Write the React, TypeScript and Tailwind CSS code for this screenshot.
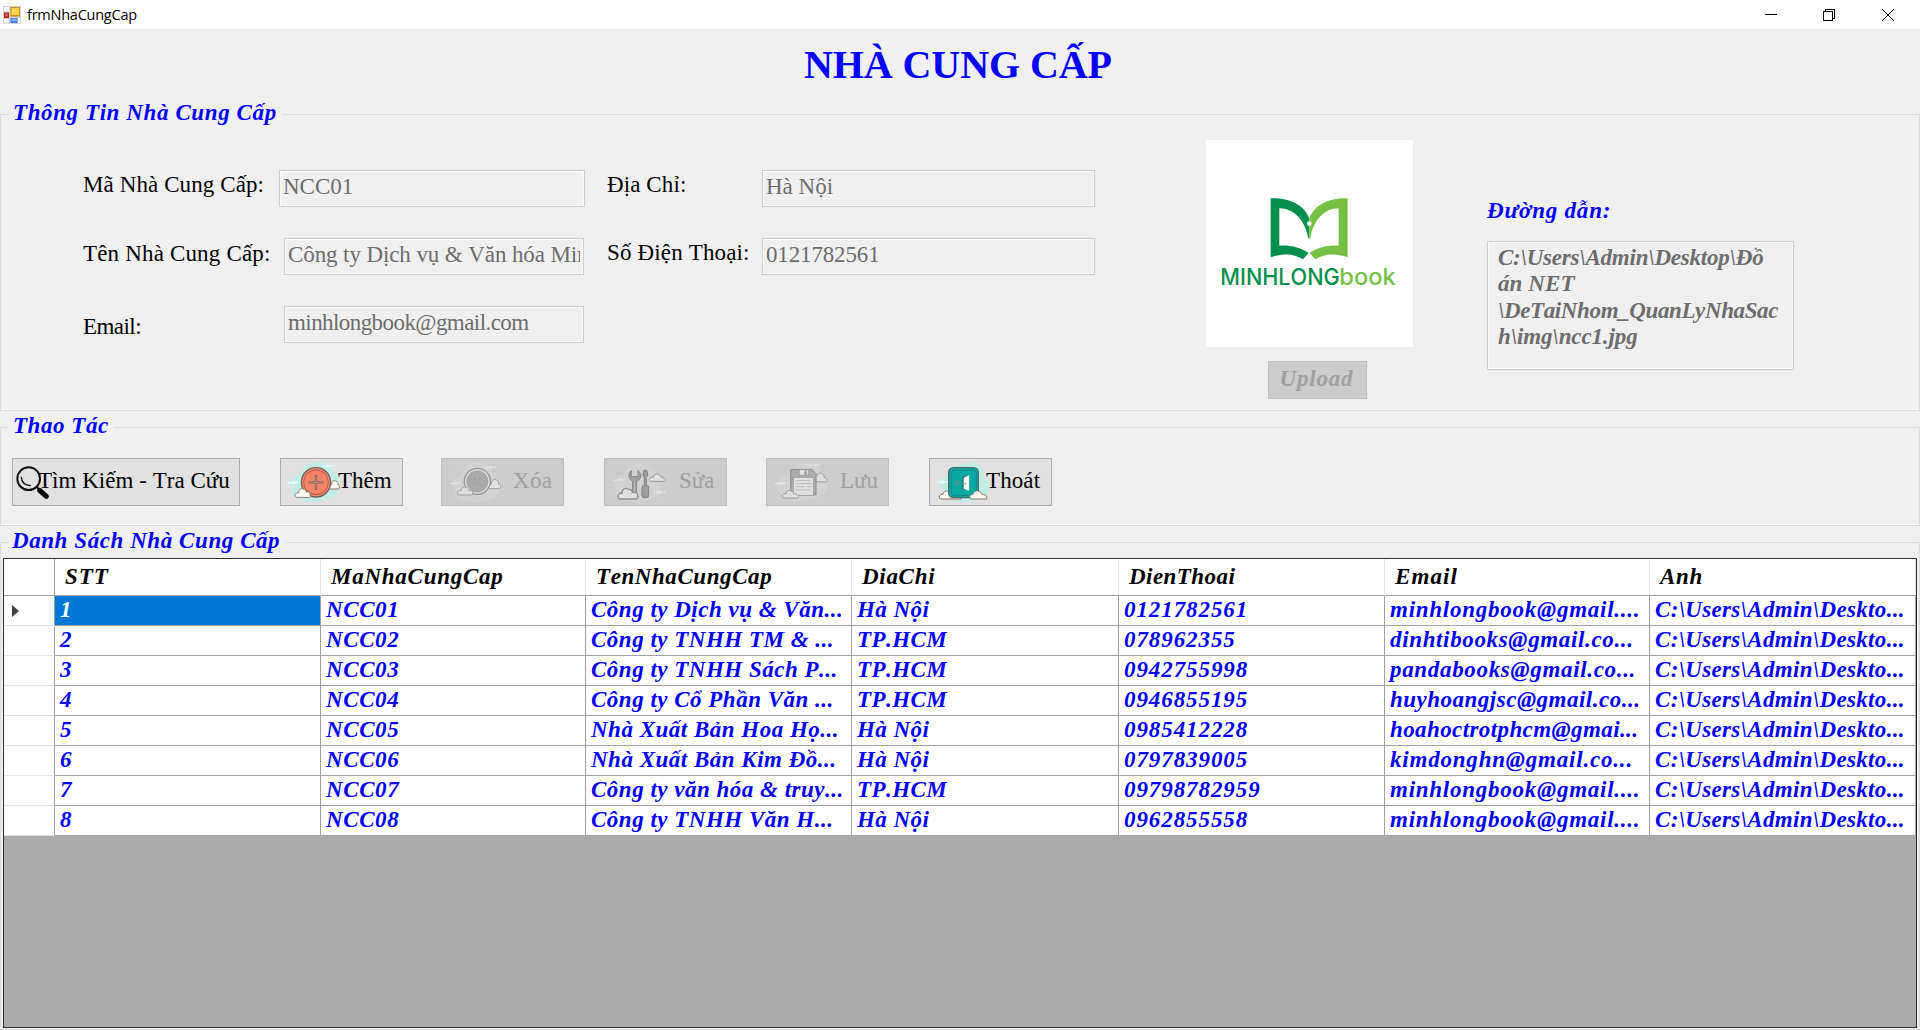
import type { ReactNode } from "react";

function GroupBox({ title, legend, className, children }: { title: string; legend: string; className: string; children: ReactNode }) {
  return (
    <fieldset className={`border border-[#dcdcdc] pl-2 shadow-[inset_0_-1px_0_#f8f8f8] ${className}`}>
      <legend className={`h-[30px] pt-px pb-[3px] pr-[5px] leading-[26px] font-bold italic text-[#0000ff] whitespace-nowrap ${legend}`}>{title}</legend>
      {children}
    </fieldset>
  );
}

function Field({ children, className }: { children: string; className: string }) {
  return (
    <div className={`h-[37px] shrink-0 border border-[#cfcfcf] px-[3px] pt-[3px] shadow-[inset_0_0_0_1px_#fafafa] text-[#6d6d6d] leading-[26px] ${className}`}>
      <div className="overflow-hidden whitespace-nowrap">{children}</div>
    </div>
  );
}

function Label({ children, className }: { children: string; className: string }) {
  return <div className={`shrink-0 whitespace-nowrap leading-[26px] text-black ${className}`}>{children}</div>;
}

function ActionButton({ icon, children, className, text, disabled }: { icon: ReactNode; children: string; className: string; text: string; disabled?: boolean }) {
  return (
    <button
      disabled={disabled}
      className={`flex h-[48px] shrink-0 items-start border ${disabled ? "border-[#bfbfbf] bg-[#cccccc] text-[#a0a0a0]" : "border-[#adadad] bg-[#e1e1e1] text-black"} ${className}`}
    >
      {icon}
      <span className={`relative mt-[9px] whitespace-nowrap leading-[26px] ${text}`}>{children}</span>
    </button>
  );
}

function SearchIcon() {
  return (
    <svg className="mt-[7px] ml-[3px] shrink-0" width="34" height="34" viewBox="48 194 102 102" fill="none">
      <circle cx="86" cy="232" r="34" stroke="#111" strokeWidth="6" />
      <path d="M64 228c1 14 10 23 27 25" stroke="#111" strokeWidth="4" strokeLinecap="round" />
      <path d="M110 257l9 9" stroke="#111" strokeWidth="6" />
      <path d="M119 267l20 18" stroke="#000" strokeWidth="15" strokeLinecap="round" />
    </svg>
  );
}

function AddIcon() {
  return (
    <svg className="mt-[2px] ml-[6px] shrink-0" width="54" height="42" viewBox="862 180 162 126" fill="none">
      <path d="M868 244c4-16 20-14 32-24 10-10 12-30 34-34 22-5 36-4 52 4 16 9 10 24 22 30 14 8 16 22 12 34-4 10-4 26-16 32-12 7-24 8-36 14-22 8-46 2-60-4-14-4-22-2-28-12-6-8 2-18-2-24-4-6-12-6-10-16z" fill="#c4ece6" />
      <path d="M862 246l34-2M882 240v10M966 196l38-2M982 189l4 10" stroke="#eefbf9" strokeWidth="4" />
      <path d="M990 264c-4-7 0-12 6-13 0-10 6-14 12-11 6 2 8 6 7 11 6 2 6 12 0 13z" fill="#fffdf2" stroke="#8b7c74" strokeWidth="3" />
      <circle cx="949" cy="244" r="44" fill="#f58466" stroke="#71625f" strokeWidth="4" />
      <circle cx="949" cy="244" r="37" stroke="#a95f52" strokeWidth="3" />
      <path d="M949 222v44M927 244h44" stroke="#7c6560" strokeWidth="7" />
      <path d="M949 225v38M930 244h38" stroke="#d69a86" strokeWidth="2" />
      <path d="M889 289c-7-7 0-15 8-13 0-11 8-15 14-12 7 1 9 5 9 10 8-4 13 3 10 8 4 2 4 7 0 7z" fill="#fffdf2" stroke="#8b7c74" strokeWidth="3" />
    </svg>
  );
}

function DeleteIcon() {
  return (
    <svg className="mt-[2px] ml-[7px] shrink-0" width="54" height="42" viewBox="87 60 162 126" fill="none">
      <path d="M92 126c4-16 22-14 32-26 10-14 14-30 34-34 22-4 44 0 54 12 8 10 2 20 14 30 14 8 20 22 14 34-6 10-4 22-20 30-14 6-22 4-34 10-20 6-46 0-56-6-12-2-18-4-22-12-4-10 0-18-6-24-6-4-12-6-10-14z" fill="#d2d2d2" />
      <path d="M88 128l34-2M108 120v12M194 80l34-2M210 73l4 12" stroke="#e2e2e2" strokeWidth="4" />
      <path d="M206 143c-4-8 2-13 8-14 0-12 9-17 16-12 7 4 6 8 5 12 10 0 10 14 0 14z" fill="#dedede" stroke="#9c9c9c" strokeWidth="3" />
      <circle cx="172" cy="121" r="39" fill="#dedede" stroke="#949494" strokeWidth="4" />
      <circle cx="172" cy="121" r="32" fill="#a9a9a9" stroke="#9b9b9b" strokeWidth="2" />
      <path d="M162 111l20 20M182 111l-20 20" stroke="#959595" strokeWidth="3" />
      <path d="M168 121h8M172 117v8" stroke="#b5b5b5" strokeWidth="2" />
      <path d="M115 162c-7-8 0-15 9-13 0-10 8-13 14-10 7 2 8 6 8 9 8-2 14 4 11 8 3 3 2 6-2 6z" fill="#dedede" stroke="#9c9c9c" strokeWidth="3" />
    </svg>
  );
}

function EditIcon() {
  return (
    <svg className="mt-[2px] ml-[8px] shrink-0" width="54" height="42" viewBox="579 60 162 126" fill="none">
      <path d="M584 118c4-16 18-8 28-20 12-14 18-26 40-30 24-6 44 0 52 16 6 12 0 26 6 36 8 12 18 24 10 38-6 12-26 10-36 18-20 10-54 6-70 0-12-4-24-10-26-24-4-14-6-20-4-34z" fill="#d2d2d2" />
      <path d="M581 118l34-2M600 110v12M702 155l34-2M718 147l3 13" stroke="#e2e2e2" strokeWidth="4" />
      <path d="M638 170v-49c-14-7-14-26-4-32v18h20V89c12 8 12 25-4 32v49z" fill="#a0a0a0" stroke="#858585" strokeWidth="3" />
      <path d="M644 125v44" stroke="#bcbcbc" strokeWidth="3" />
      <path d="M671 89q5-4 10 0l2 13-4 7v26h-6v-26l-4-7z" fill="#9a9a9a" stroke="#858585" strokeWidth="3" />
      <rect x="666" y="133" width="20" height="37" rx="6" fill="#9b9b9b" stroke="#858585" strokeWidth="3" />
      <path d="M672 141v20M679 141v20" stroke="#b0b0b0" strokeWidth="2" />
      <path d="M690 121c-5-7 2-14 10-12 0-11 14-15 20-4 6 0 8 4 7 6 8-1 11 7 7 10z" fill="#dedede" stroke="#9a9a9a" strokeWidth="3" />
      <path d="M598 174c-8-8-1-19 8-17 0-14 13-19 20-11 6-3 12 3 11 9 10-4 19 4 15 10 4 4 2 9-3 9z" fill="#e0e0e0" stroke="#949494" strokeWidth="4" />
    </svg>
  );
}

function SaveIcon() {
  return (
    <svg className="mt-[2px] ml-[7px] shrink-0" width="55" height="42" viewBox="99 60 165 126" fill="none">
      <path d="M106 130c4-16 22-20 32-30 10-14 20-28 42-32 28-4 48 2 56 16 6 10 2 20 10 30 10 12 18 22 10 38-8 12-24 10-36 20-22 10-56 8-78 2-16-2-22-8-26-20-4-8-12-12-10-24z" fill="#d2d2d2" />
      <path d="M102 128l34-2M120 120v12M204 73l34-2M220 66l4 12" stroke="#e2e2e2" strokeWidth="4" />
      <path d="M222 122c-4-12 0-18 8-20 2-6 10-8 15-3 5 4 5 7 4 11 10 0 14 12 4 13z" fill="#dedede" stroke="#9c9c9c" strokeWidth="3" />
      <path d="M151 85h62l12 13v64h-76V87z" fill="#ababab" stroke="#8c8c8c" strokeWidth="3" />
      <path d="M175 86h28v17h-28z" fill="#dedede" stroke="#959595" strokeWidth="2" />
      <path d="M190 88h8v14h-8z" fill="#aaa" />
      <rect x="157" y="109" width="60" height="54" fill="#e0e0e0" stroke="#999" strokeWidth="2" />
      <path d="M164 119h44M162 128h50M164 137h28M198 137h14M164 147h46" stroke="#b4b4b4" strokeWidth="2.500" />
      <path d="M126 171c-7-8 0-14 9-12 0-10 10-13 17-8 6 2 7 5 7 8 8-2 15 3 13 8 1 3-1 4-3 4z" fill="#dedede" stroke="#9c9c9c" strokeWidth="3" />
    </svg>
  );
}

function ExitIcon() {
  return (
    <svg className="mt-[2px] ml-[7px] shrink-0" width="53" height="42" viewBox="592 60 159 126" fill="none">
      <path d="M596 124c6-14 24-14 34-24 12-14 20-30 44-34 24-4 42 0 52 14 8 14 4 22 12 36 10 12 12 24 6 40-8 12-24 10-36 20-20 8-52 10-66 2-14-2-22-6-28-18-4-10-2-16-8-22-6-4-12-6-10-14z" fill="#c1ece6" />
      <path d="M594 124l32-2M606 115l4 14" stroke="#effbf9" strokeWidth="4" />
      <path d="M602 174c-8-8 0-16 8-14 2-11 12-12 19-7 12 2 30 8 36 21z" fill="#fffaf0" stroke="#85766e" strokeWidth="3" />
      <rect x="627" y="80" width="89" height="90" rx="14" fill="#07a9a5" stroke="#4f6b6a" strokeWidth="4" />
      <path d="M634 99q0-12 12-12h52q12 0 12 12v54q0 11-12 11h-52q-12 0-12-11z" stroke="#168786" strokeWidth="3" />
      <path d="M668 106h12v38h-12z" stroke="#54716b" strokeWidth="3" />
      <path d="M673 111l15-8v46l-15-6z" fill="#fffdf2" stroke="#c9d9d0" strokeWidth="1" />
      <circle cx="677" cy="128" r="2" fill="#777" />
      <path d="M648 126h20M656 118l-8 8 8 8" stroke="#5d8e89" strokeWidth="4" />
      <path d="M694 174c-7-7-3-14 6-14 1-10 14-14 21-7 6 2 7 5 7 8 9-2 16 6 13 13z" fill="#fffaf0" stroke="#85766e" strokeWidth="3" />
    </svg>
  );
}

function AppIcon() {
  return (
    <svg width="18" height="18" viewBox="0 0 18 18">
      <rect x="0" y="0" width="18" height="18" fill="#d2d2d2" />
      <rect x="1" y="1" width="5" height="4.500" fill="#fff" />
      <rect x="1" y="13" width="5" height="4" fill="#fff" />
      <rect x="15" y="12" width="2" height="5" fill="#fff" />
      <rect x="7.500" y="1" width="9.500" height="9.500" fill="#c99412" />
      <rect x="8.500" y="2" width="7.500" height="7" fill="#fcd549" />
      <rect x="1" y="6.500" width="5" height="5.500" fill="#b3201c" />
      <rect x="2.200" y="7.500" width="2.500" height="3" fill="#e0675d" />
      <rect x="7.500" y="12" width="7" height="5" fill="#4583e0" />
      <rect x="8.500" y="13" width="5" height="2" fill="#86b4f4" />
    </svg>
  );
}

function CompanyLogo() {
  return (
    <svg width="207" height="207" viewBox="78 60 621 621" className="bg-white">
      <path fill="#048f4c" d="M272 235c60-2 103 22 116 62v60c-2-2-3-4-4-6-8-48-42-86-86-86v112c34-2 64 6 88 22l-17 19c-28-18-60-18-97-6z" />
      <path fill="#76c043" d="M503 235c-60-2-102 22-115 62v60c2-2 3-4 4-6 8-48 40-86 84-86v112c-34-2-64 6-87 22l17 19c28-18 60-18 97-6z" />
      <circle cx="388" cy="311" r="7" fill="#fff" />
      <g fontFamily="Inter, sans-serif" fontSize="67" fontWeight="500">
        <text x="121" y="494" fill="#048f4c" textLength="358" lengthAdjust="spacingAndGlyphs">MINHLONG</text>
        <text x="478" y="494" fill="#76c043" textLength="169" lengthAdjust="spacingAndGlyphs">book</text>
      </g>
    </svg>
  );
}

const columns = [
  { name: "STT", tracking: "tracking-[1px]" },
  { name: "MaNhaCungCap", tracking: "tracking-[0.75px]" },
  { name: "TenNhaCungCap", tracking: "tracking-[0.58px]" },
  { name: "DiaChi", tracking: "tracking-[0.7px]" },
  { name: "DienThoai", tracking: "tracking-[0.45px]" },
  { name: "Email", tracking: "tracking-[1.1px]" },
  { name: "Anh", tracking: "tracking-[0.7px]" },
];

const path = "C:\\Users\\Admin\\Deskto...";
const rows = [
  ["1", "NCC01", "Công ty Dịch vụ & Văn...", "Hà Nội", "0121782561", "minhlongbook@gmail....", path],
  ["2", "NCC02", "Công ty TNHH TM & ...", "TP.HCM", "078962355", "dinhtibooks@gmail.co...", path],
  ["3", "NCC03", "Công ty TNHH Sách P...", "TP.HCM", "0942755998", "pandabooks@gmail.co...", path],
  ["4", "NCC04", "Công ty Cổ Phần Văn ...", "TP.HCM", "0946855195", "huyhoangjsc@gmail.co...", path],
  ["5", "NCC05", "Nhà Xuất Bản Hoa Họ...", "Hà Nội", "0985412228", "hoahoctrotphcm@gmai...", path],
  ["6", "NCC06", "Nhà Xuất Bản Kim Đồ...", "Hà Nội", "0797839005", "kimdonghn@gmail.co...", path],
  ["7", "NCC07", "Công ty văn hóa & truy...", "TP.HCM", "09798782959", "minhlongbook@gmail....", path],
  ["8", "NCC08", "Công ty TNHH Văn H...", "Hà Nội", "0962855558", "minhlongbook@gmail....", path],
];

const tracking = [
  "tracking-[0.5px]",
  "tracking-[0.6px]",
  "tracking-[0.5px]",
  "tracking-[0.45px]",
  "tracking-[0.92px]",
  "",
  "tracking-[0.32px]",
];

const emailTracking = [
  "tracking-[0.75px]",
  "tracking-[0.65px]",
  "tracking-[0.67px]",
  "tracking-[0.5px]",
  "tracking-[0.4px]",
  "tracking-[0.8px]",
  "tracking-[0.75px]",
  "tracking-[0.75px]",
];

const gridCols = "grid grid-cols-[51px_266px_265px_266px_267px_266px_265px_266px]";

function SupplierTable() {
  return (
    <div className="h-[470px] w-[1914px] border border-[#2e2e2e] bg-[#ababab] font-bold italic leading-[26px]">
      <div className={`${gridCols} h-[37px] bg-white text-black`}>
        <div className="border-r border-b border-[#a0a0a0]" />
        {columns.map((c) => (
          <div key={c.name} className={`border-b border-b-[#a0a0a0] border-r border-r-[#e5e5e5] pt-[5px] pl-[10px] ${c.tracking}`}>
            {c.name}
          </div>
        ))}
      </div>
      {rows.map((row, r) => (
        <div key={row[0]} className={`${gridCols} h-[30px] bg-white`}>
          <div className="flex items-center border-r border-r-[#a0a0a0] border-b border-b-[#e5e5e5] pt-px pl-2">
            {r === 0 && (
              <svg width="7" height="12" viewBox="0 0 7 12">
                <path d="M0 0l7 6-7 6z" fill="#404040" />
              </svg>
            )}
          </div>
          {row.map((cell, c) => (
            <div
              key={c}
              className={`overflow-hidden whitespace-nowrap border-r border-b border-[#a0a0a0] pt-px pl-[5px] ${c === 5 ? emailTracking[r] : tracking[c]} ${r === 0 && c === 0 ? "bg-[#0078d7] text-white" : "text-[#0000ff]"}`}
            >
              {cell}
            </div>
          ))}
        </div>
      ))}
    </div>
  );
}

export default function App() {
  return (
    <div className="flex h-[1030px] w-[1920px] flex-col overflow-hidden bg-[#f0f0f0] font-['Liberation_Serif',serif] text-[23px] [font-kerning:none]">
      <header className="flex h-[29px] shrink-0 items-center bg-white pl-[3px]">
        <AppIcon />
        <span className="ml-[6px] font-['Open_Sans','Noto_Sans',sans-serif] text-[14.5px] leading-5 tracking-[-0.24px] text-black">frmNhaCungCap</span>
        <svg className="ml-auto mr-[25px]" width="131" height="14" viewBox="0 0 131 14" fill="none" stroke="#000" shapeRendering="crispEdges">
          <path d="M1 6.500h12" />
          <path d="M59.500 3.500h9v9h-9zM61.500 3.500v-2h9v9h-2" />
          <path d="M118 1l12 12M130 1l-12 12" shapeRendering="auto" />
        </svg>
      </header>

      <h1 className="mt-[14px] h-[57px] shrink-0 pl-[804px] text-[40px] leading-[44px] font-bold tracking-[-0.08px] text-[#0000ff]">NHÀ CUNG CẤP</h1>

      <GroupBox title="Thông Tin Nhà Cung Cấp" legend="pl-[4px] tracking-[0.6px]" className="-mt-px h-[312px] shrink-0">
        <div className="flex pl-[74px]">
          <div className="flex flex-col gap-[31px] pt-[41px]">
            <div className="flex h-[37px]">
              <Label className="mt-[2px] w-[196px] tracking-[0.1px]">Mã Nhà Cung Cấp:</Label>
              <Field className="w-[306px]">NCC01</Field>
              <Label className="mt-[2px] ml-[22px] w-[155px] tracking-[0.1px]">Địa Chỉ:</Label>
              <Field className="w-[333px]">Hà Nội</Field>
            </div>
            <div className="flex h-[37px]">
              <Label className="mt-[3px] w-[201px] tracking-[0.17px]">Tên Nhà Cung Cấp:</Label>
              <Field className="w-[300px] tracking-[-0.1px]">Công ty Dịch vụ &amp; Văn hóa Min</Field>
              <Label className="mt-[2px] ml-[23px] w-[155px] tracking-[0.15px]">Số Điện Thoại:</Label>
              <Field className="w-[333px] tracking-[-0.15px]">0121782561</Field>
            </div>
            <div className="flex h-[37px]">
              <Label className="mt-[8px] w-[201px] tracking-[-0.55px]">Email:</Label>
              <Field className="w-[300px] tracking-[-0.57px]">minhlongbook@gmail.com</Field>
            </div>
          </div>

          <div className="ml-[111px] flex w-[207px] flex-col pt-[11px]">
            <CompanyLogo />
            <button disabled className="mt-[14px] ml-[62px] flex h-[38px] w-[99px] items-start justify-center border border-[#bfbfbf] bg-[#cccccc] pt-[4px] pr-[2px] leading-[26px] font-bold italic tracking-[0.8px] text-[#a0a0a0]">
              Upload
            </button>
          </div>

          <div className="ml-[74px] flex flex-col pt-[69px] font-bold italic leading-[26px]">
            <div className="tracking-[0.8px] text-[#0000ff]">Đường dẫn:</div>
            <div className="mt-[17px] h-[129px] w-[307px] border border-[#cfcfcf] pt-[3px] pl-[10px] leading-[26.250px] whitespace-nowrap text-[#6d6d6d] shadow-[inset_0_0_0_1px_#fafafa]">
              <div className="tracking-[-0.22px]">C:\Users\Admin\Desktop\Đồ</div>
              <div className="tracking-[0.1px]">án NET</div>
              <div className="tracking-[-0.38px]">\DeTaiNhom_QuanLyNhaSac</div>
              <div className="tracking-[-0.12px]">h\img\ncc1.jpg</div>
            </div>
          </div>
        </div>
      </GroupBox>

      <GroupBox title="Thao Tác" legend="pl-[4px] tracking-[0.55px]" className="mt-px h-[114px] shrink-0">
        <div className="flex pt-[16px] pl-[3px]">
          <ActionButton className="w-[228px]" text="-ml-[12px] tracking-[0.03px]" icon={<SearchIcon />}>Tìm Kiếm - Tra Cứu</ActionButton>
          <ActionButton className="ml-[40px] w-[123px]" text="-ml-[3px]" icon={<AddIcon />}>Thêm</ActionButton>
          <ActionButton className="ml-[38px] w-[123px]" text="ml-[10px] tracking-[0.3px]" icon={<DeleteIcon />} disabled>Xóa</ActionButton>
          <ActionButton className="ml-[40px] w-[123px]" text="ml-[12px]" icon={<EditIcon />} disabled>Sửa</ActionButton>
          <ActionButton className="ml-[39px] w-[123px]" text="ml-[11px]" icon={<SaveIcon />} disabled>Lưu</ActionButton>
          <ActionButton className="ml-[40px] w-[123px]" text="-ml-[4px] tracking-[0.1px]" icon={<ExitIcon />}>Thoát</ActionButton>
        </div>
      </GroupBox>

      <GroupBox title="Danh Sách Nhà Cung Cấp" legend="pl-[3px] tracking-[0.57px]" className="mt-px h-[503px] shrink-0">
        <div className="-ml-[6px] pt-px">
          <SupplierTable />
        </div>
      </GroupBox>
    </div>
  );
}
